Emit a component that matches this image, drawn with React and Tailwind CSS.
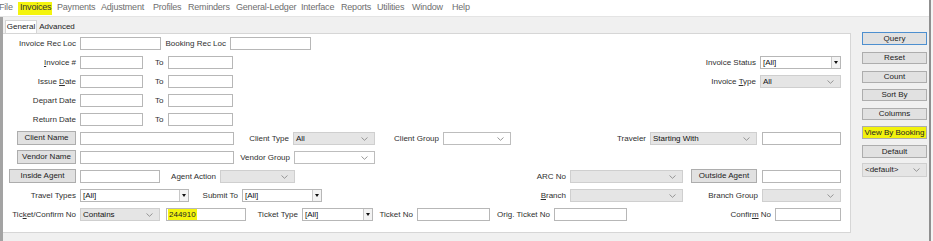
import React from "react";

const Chevron = () => (
  <svg width="7" height="4" viewBox="0 0 7 4" className="shrink-0">
    <path d="M0.5 0.5 L3.5 3.3 L6.5 0.5" stroke="#8c8c8c" strokeWidth="0.9" fill="none" />
  </svg>
);

function Label({ w, children, pl }) {
  return (
    <div
      className={`${w} h-[13px] shrink-0 flex items-center whitespace-nowrap text-[#2f2f2f] ${
        pl ? "justify-start pl-[12px]" : "justify-end pr-[4px]"
      }`}
    >
      <span className="whitespace-pre">{children}</span>
    </div>
  );
}

function Gap({ w }) {
  return <div className={`${w} shrink-0`} />;
}

function Input({ w, children }) {
  return (
    <div className={`${w} h-[13px] shrink-0 border border-[#b7b7b7] bg-white flex items-center pl-[1px] text-[#111]`}>
      {children}
    </div>
  );
}

function GraySelect({ w, value }) {
  return (
    <div className={`${w} h-[13px] shrink-0 border border-[#cfcfcf] bg-[#e5e5e5] flex items-center justify-between pl-[2px] pr-[6px] text-[#111]`}>
      <span className="whitespace-nowrap">{value}</span>
      <Chevron />
    </div>
  );
}

function WhiteSelect({ w }) {
  return (
    <div className={`${w} h-[13px] shrink-0 border border-[#bdbdbd] bg-white flex items-center justify-end pr-[6px]`}>
      <Chevron />
    </div>
  );
}

function Combo({ w, value }) {
  return (
    <div className={`${w} h-[13px] shrink-0 border border-[#b7b7b7] bg-white flex items-center justify-between pl-[2px] text-[#111]`}>
      <span>{value}</span>
      <div className="w-[9px] h-[11px] border-l border-[#c8c8c8] bg-[#f3f3f3] flex items-center justify-center">
        <svg width="4" height="3" viewBox="0 0 4 3">
          <path d="M0 0 L4 0 L2 3 Z" fill="#111" />
        </svg>
      </div>
    </div>
  );
}

function Btn({ w, children }) {
  return (
    <div className={`${w} h-[14px] -mt-[1px] shrink-0 border border-[#adadad] bg-[#e1e1e1] flex items-center justify-center whitespace-nowrap text-[#222]`}>
      {children}
    </div>
  );
}

function Row({ children }) {
  return <div className="flex h-[19px] items-start">{children}</div>;
}

const U = ({ children }) => <span className="underline">{children}</span>;

function SideButton({ mt, h, children, blue, yellow }) {
  return (
    <div
      className={`${mt} ${h} w-[65px] ml-[11px] flex items-center justify-center border text-[8px] text-[#222] ${
        blue ? "border-[#4d8fcf]" : "border-[#adadad]"
      } ${yellow ? "bg-[#f2f20c]" : "bg-[#e1e1e1]"}`}
    >
      {children}
    </div>
  );
}

export default function App() {
  const menu = [
    ["File", "w-[19px] -ml-[1px]"],
    ["Invoices", "w-[34px] bg-[#f4f40e] text-[#333] pl-[2px]"],
    ["Payments", "w-[44px] ml-[5px]"],
    ["Adjustment", "w-[52px]"],
    ["Profiles", "w-[35px]"],
    ["Reminders", "w-[48px]"],
    ["General-Ledger", "w-[65px]"],
    ["Interface", "w-[40px]"],
    ["Reports", "w-[36px]"],
    ["Utilities", "w-[35px]"],
    ["Window", "w-[40px]"],
    ["Help", "w-[30px]"],
  ];

  return (
    <div className="w-[933px] h-[241px] flex bg-[#f7f7f7] overflow-hidden font-['Liberation_Sans',Arial,sans-serif] text-[8px]">
      <div className="w-[929px] flex flex-col">
        {/* menu bar */}
        <div className="h-[17px] bg-white border-b border-[#e4e4e4] flex items-center text-[9px] tracking-[-0.2px] text-[#6e6e6e]">
          {menu.map(([t, c]) => (
            <span key={t} className={`${c} h-[13px] flex items-center shrink-0 whitespace-nowrap`}>
              {t}
            </span>
          ))}
        </div>

        <div className="flex flex-1 bg-[#f0f0f0]">
          {/* main form area */}
          <div className="w-[851px] border-l-[3px] border-[#a3a3a3] flex flex-col">
            <div className="h-[16px] flex items-end pl-[2px]">
              <div className="w-[32px] h-[13px] bg-white border border-b-0 border-[#d6d6d6] flex items-center justify-center text-[#222]">
                General
              </div>
              <div className="w-[40px] h-[12px] flex items-center justify-center text-[#222]">Advanced</div>
            </div>

            <div className="h-[200px] bg-white border-t border-r border-b border-[#d6d6d6] pt-[3px]">
              <Row>
                <Label w="w-[77px]">Invoice Rec Loc</Label>
                <Input w="w-[81px]" />
                <Label w="w-[69px]">Booking Rec Loc</Label>
                <Input w="w-[81px]" />
              </Row>
              <Row>
                <Label w="w-[77px]">
                  <U>I</U>nvoice #
                </Label>
                <Input w="w-[63px]" />
                <Label w="w-[25px]" pl>To</Label>
                <Input w="w-[65px]" />
                <Label w="w-[527px]">Invoice Status</Label>
                <Combo w="w-[81px]" value="[All]" />
              </Row>
              <Row>
                <Label w="w-[77px]">
                  {"Issue "}<U>D</U>ate
                </Label>
                <Input w="w-[63px]" />
                <Label w="w-[25px]" pl>To</Label>
                <Input w="w-[65px]" />
                <Label w="w-[527px]">
                  {"Invoice "}<U>T</U>ype
                </Label>
                <GraySelect w="w-[81px]" value="All" />
              </Row>
              <Row>
                <Label w="w-[77px]">Depart Date</Label>
                <Input w="w-[63px]" />
                <Label w="w-[25px]" pl>To</Label>
                <Input w="w-[65px]" />
              </Row>
              <Row>
                <Label w="w-[77px]">Return Date</Label>
                <Input w="w-[63px]" />
                <Label w="w-[25px]" pl>To</Label>
                <Input w="w-[65px]" />
              </Row>
              <Row>
                <Gap w="w-[14px]" />
                <Btn w="w-[59px]">Client Name</Btn>
                <Gap w="w-[4px]" />
                <Input w="w-[154px]" />
                <Label w="w-[59px]">Client Type</Label>
                <GraySelect w="w-[82px]" value="All" />
                <Label w="w-[68px]">Client Group</Label>
                <WhiteSelect w="w-[68px]" />
                <Label w="w-[139px]">Traveler</Label>
                <GraySelect w="w-[107px]" value="Starting With" />
                <Gap w="w-[5px]" />
                <Input w="w-[79px]" />
              </Row>
              <Row>
                <Gap w="w-[14px]" />
                <Btn w="w-[59px]">Vendor Name</Btn>
                <Gap w="w-[4px]" />
                <Input w="w-[154px]" />
                <Label w="w-[60px]">Vendor Group</Label>
                <WhiteSelect w="w-[81px]" />
              </Row>
              <Row>
                <Gap w="w-[6px]" />
                <Btn w="w-[67px]">Inside Agent</Btn>
                <Gap w="w-[4px]" />
                <Input w="w-[80px]" />
                <Label w="w-[60px]">Agent Action</Label>
                <GraySelect w="w-[75px]" value="" />
                <Label w="w-[275px]">ARC No</Label>
                <GraySelect w="w-[113px]" value="" />
                <Gap w="w-[8px]" />
                <Btn w="w-[66px]">Outside Agent</Btn>
                <Gap w="w-[5px]" />
                <Input w="w-[79px]" />
              </Row>
              <Row>
                <Label w="w-[77px]">Travel Types</Label>
                <Combo w="w-[109px]" value="[All]" />
                <Label w="w-[53px]">Submit To</Label>
                <Combo w="w-[80px]" value="[All]" />
                <Label w="w-[248px]">
                  <U>B</U>ranch
                </Label>
                <GraySelect w="w-[113px]" value="" />
                <Label w="w-[79px]">Branch Group</Label>
                <GraySelect w="w-[79px]" value="" />
              </Row>
              <Row>
                <Label w="w-[77px]">
                  Tic<U>k</U>et/Confirm No
                </Label>
                <GraySelect w="w-[80px]" value="Contains" />
                <Gap w="w-[6px]" />
                <Input w="w-[80px]">
                  <span className="bg-[#f4f40e] px-[1px] h-[11px] flex items-center text-[#222]">244910</span>
                </Input>
                <Label w="w-[56px]">Ticket Type</Label>
                <Combo w="w-[71px]" value="[All]" />
                <Label w="w-[44px]">Ticket No</Label>
                <Input w="w-[73px]" />
                <Label w="w-[64px]">Orig. Ticket No</Label>
                <Input w="w-[73px]" />
                <Label w="w-[148px]">
                  Confir<U>m</U>{" No"}
                </Label>
                <Input w="w-[66px]" />
              </Row>
            </div>
          </div>

          {/* right command column */}
          <div className="w-[78px] flex flex-col">
            <SideButton mt="mt-[15px]" h="h-[13px]" blue>Query</SideButton>
            <SideButton mt="mt-[7px]" h="h-[12px]">Reset</SideButton>
            <SideButton mt="mt-[7px]" h="h-[12px]">Count</SideButton>
            <SideButton mt="mt-[6px]" h="h-[12px]">Sort By</SideButton>
            <SideButton mt="mt-[7px]" h="h-[12px]">Columns</SideButton>
            <SideButton mt="mt-[6px]" h="h-[13px]" yellow>View By Booking</SideButton>
            <SideButton mt="mt-[6px]" h="h-[13px]">Default</SideButton>
            <div className="mt-[5px] ml-[11px] w-[65px] h-[14px] border border-[#cfcfcf] bg-[#e5e5e5] flex items-center justify-between pl-[2px] pr-[6px] text-[#222]">
              <span>&lt;default&gt;</span>
              <Chevron />
            </div>
          </div>
        </div>
      </div>
      <div className="w-[2px] bg-[#8f8f8f]" />
      <div className="w-[2px] bg-[#f4f4f4]" />
    </div>
  );
}
